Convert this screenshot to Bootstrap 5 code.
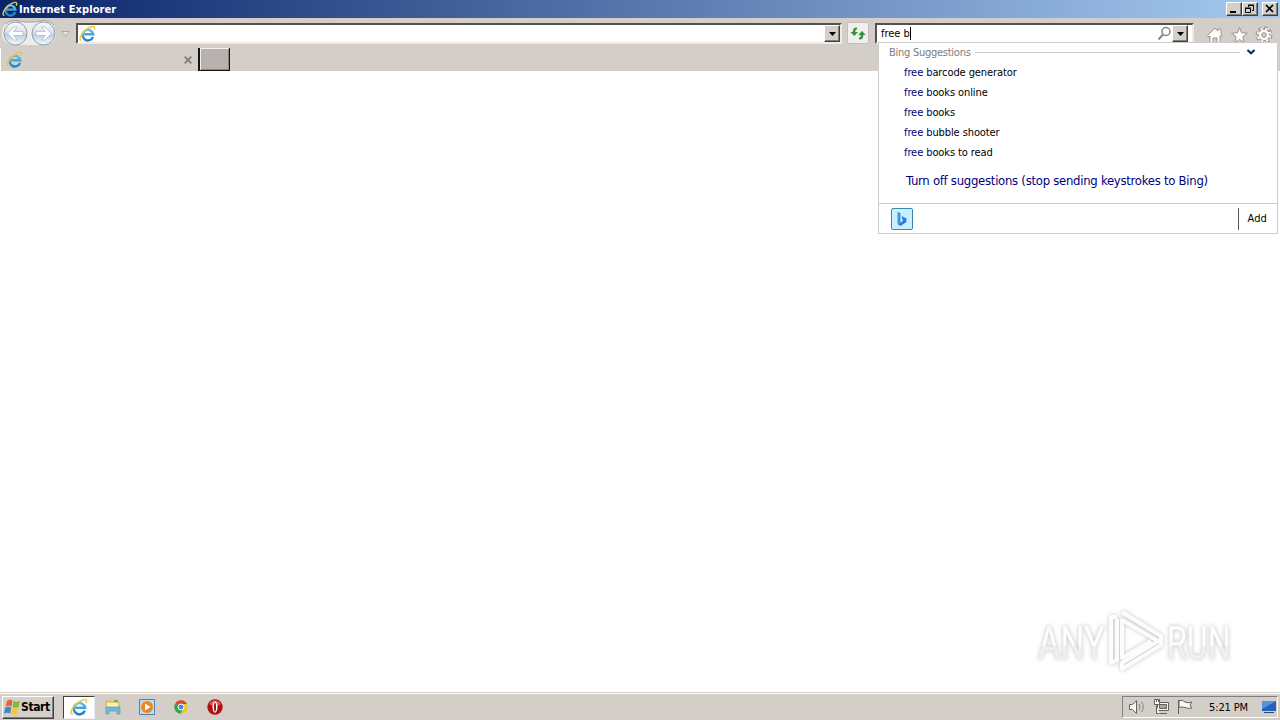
<!DOCTYPE html>
<html lang="en">
<head>
    <meta charset="UTF-8">
    <meta name="viewport" content="width=device-width, initial-scale=1.0">
    <title>Internet Explorer</title>
    <link href="https://cdn.jsdelivr.net/npm/bootstrap@5.3.0/dist/css/bootstrap.min.css" rel="stylesheet">
    <style>
        body {
            font-family: "DejaVu Sans Condensed", "DejaVu Sans", sans-serif;
            font-size: 11px;
            line-height: 14px;
            color: #000;
            background: #fff;
        }
        svg { display: block; flex: none; }
        .face { background: #d4cec8; }

        /* title bar */
        .titlebar {
            height: 18px;
            padding: 0 2px;
            background: linear-gradient(90deg, #0a246a 0%, #a6caf0 100%);
            color: #fff;
        }
        .titlebar-text { font-weight: bold; letter-spacing: .08px; margin-left: 1px; padding-top: 1px; }
        .raised {
            background: #d4d0c8;
            border: 1px solid;
            border-color: #fff #404040 #404040 #fff;
            box-shadow: inset -1px -1px #808080;
        }
        .win-btn { width: 16px; height: 14px; }

        /* toolbar */
        .toolbar { height: 30px; }
        .sunken {
            height: 21px;
            background: #fff;
            border: 2px solid;
            border-color: #55504d #eeeae6 #eeeae6 #55504d;
            margin-top: 5px;
        }
        .address { width: 766px; padding-left: 1px; }
        .search { width: 319px; padding-left: 4px; margin-left: 6px; }
        .search-text { letter-spacing: -.02px; padding-top: 1px; }
        .drop-btn { width: 16px; height: 17px; }
        .caret-line { width: 1px; height: 13px; background: #000; }
        .refresh { width: 22px; height: 22px; background: #f0efed; border: 1px solid #c3bfc0; border-radius: 2px; margin-left: 5px; }

        /* tabs */
        .tabs { height: 23px; }
        .page-tab { width: 198px; border-left: 1px solid #fff; padding: 0 6px 0 5px; }
        .new-tab {
            width: 32px;
            background: #b9b1ad;
            border: solid #151515;
            border-width: 0 1px 1px 2px;
            box-shadow: inset 1px 1px #f3efec, inset -1px -1px #8b8480;
        }

        /* suggestion list */
        .suggest {
            position: absolute;
            left: 878px;
            top: 42px;
            width: 400px;
            height: 192px;
            background: #fff;
            border: 1px solid #ccc;
        }
        .suggest-head { height: 19px; padding: 0 21px 0 10px; color: #7b7b7b; letter-spacing: -.26px; }
        .rule { height: 1px; background: #c9c9c9; margin-left: 4px; margin-right: 6px; }
        .suggest-item { height: 20px; padding-left: 25px; padding-top: 4px; letter-spacing: -.09px; }
        .suggest-item span, .turn-off { color: #00007a; }
        .turn-off { font-size: 13px; padding: 12px 0 0 27px; height: 41px; letter-spacing: -.28px; }
        .suggest-foot { height: 30px; border-top: 1px solid #ccc; padding: 0 10px 0 12px; }
        .add-link { height: 22px; border-left: 1px solid #555; padding: 4px 0 0 8px; letter-spacing: .15px; }

        .watermark { position: absolute; left: 1020px; top: 592px; filter: drop-shadow(0 0 2px #c4c4c4); }

        /* taskbar */
        .taskbar { height: 28px; border-top: 1px solid #d4d0c8; box-shadow: inset 0 1px #fff; padding: 3px 2px 2px; }
        .start-btn { width: 52px; height: 23px; font-size: 12px; font-weight: bold; letter-spacing: -.4px; padding-left: 1px; }
        .task-active { width: 32px; height: 23px; background: #fff; border: 1px solid; border-color: #404040 #eee #eee #404040; margin-left: 9px; }
        .quick { margin-left: 9px; gap: 16px; }
        .tray { width: 156px; height: 22px; border: 1px solid; border-color: #808080 #fff #fff #808080; padding-left: 5px; }
        .clock { letter-spacing: -.12px; margin-left: 15px; padding-top: 1px; white-space: nowrap; }
    </style>
</head>
<body class="vh-100 overflow-hidden d-flex flex-column">

    <!-- shared icons -->
    <svg width="0" height="0" class="position-absolute">
        <defs>
            <linearGradient id="ieBlue" x1="0" y1="0" x2="0" y2="1"><stop offset="0" stop-color="#5cc0ef"/><stop offset="1" stop-color="#2580c8"/></linearGradient>
            <linearGradient id="orb" x1="0" y1="0" x2="0" y2="1"><stop offset="0" stop-color="#fafafb"/><stop offset=".48" stop-color="#dbdfe5"/><stop offset=".52" stop-color="#bccad7"/><stop offset="1" stop-color="#f4fcff"/></linearGradient>
            <linearGradient id="mark" x1="0" y1="0" x2="0" y2="1"><stop offset=".55" stop-color="#fff"/><stop offset=".56" stop-color="#f0f0f0"/></linearGradient>
            <symbol id="ie" viewBox="0 0 16 16">
                <path d="M13.2 11.100A5 5 0 1 1 13.400 8.700H5" fill="none" stroke="url(#ieBlue)" stroke-width="2.300"/>
                <path d="M2.400 14.300C-.4 14.500 1.200 9.200 5.600 5.300 9.600 1.700 14.200.300 14.700 2.300c.2.800-.1 1.500-.5 2.300" fill="none" stroke="#ecc93e" stroke-width="1.400"/>
            </symbol>
            <symbol id="down" viewBox="0 0 7 4"><path d="M0 0h7L3.500 4z"/></symbol>
        </defs>
    </svg>

    <div class="titlebar d-flex align-items-center">
        <svg width="16" height="16"><use href="#ie"/></svg>
        <span class="titlebar-text">Internet Explorer</span>
        <div class="d-flex ms-auto">
            <div class="raised win-btn"><svg width="14" height="12"><path d="M3 8h6v2H3z"/></svg></div>
            <div class="raised win-btn"><svg width="14" height="12"><path d="M5.500 4V2.500h5v5H9M5 2h6M2.500 5.500h5v4h-5zM2 5h6" fill="none" stroke="#000"/></svg></div>
            <div class="raised win-btn ms-1"><svg width="14" height="12"><path d="M3 2l7 7M10 2L3 9" stroke="#000" stroke-width="1.700"/></svg></div>
        </div>
    </div>

    <div class="toolbar face d-flex align-items-start">
        <svg width="76" height="30" viewBox="0 0 76 30">
            <path d="M3 9Q8 2 16 3c8 2 19 2 27 0 8-1 13 6 13 13 0 7-5 11-13 11H16C8 27 2 23 2 16z" fill="#efedec"/>
            <path d="M5 6Q10 2 16 2.500c8 2 19 2 27 0 5 0 9 2 11 4.500" fill="none" stroke="#a9a5a4"/>
            <g fill="url(#orb)" stroke="#8e9eac"><circle cx="15.500" cy="15.500" r="11.500"/><circle cx="43.500" cy="15.500" r="11.500"/></g>
            <g fill="#fff" stroke="#afbac6" stroke-width=".8">
                <path d="M7.500 15.500l6.500-6.500h3.500l-3.800 4.500h9.300v4H13.700l3.800 4.500H14z"/>
                <path d="M51.500 15.500L45 9h-3.500l3.800 4.500H36v4h9.300L41.500 22H45z"/>
            </g>
            <path d="M61.500 13.500h8l-4 4.500z" fill="#e8e4e1" stroke="#b0aaa6"/>
        </svg>
        <div class="address sunken d-flex align-items-center">
            <svg width="17" height="17" class="me-auto"><use href="#ie"/></svg>
            <div class="drop-btn raised d-flex align-items-center justify-content-center"><svg width="7" height="4"><use href="#down"/></svg></div>
        </div>
        <div class="refresh mt-1">
            <svg width="20" height="20" viewBox="0 0 20 20" fill="#389238">
                <path d="M9 4.500Q4.800 4 4.800 9H2.500l3.800 4 3.700-4H7.300Q7 6.500 9 6.300z"/>
                <path d="M11 16.500Q15.300 17 15.300 12H17.700L14 8l-3.800 4h2.600Q13 14.500 11 14.700z"/>
            </svg>
        </div>
        <div class="search sunken d-flex align-items-center">
            <span class="search-text">free b</span><span class="caret-line"></span>
            <svg width="15" height="15" viewBox="0 0 15 15" class="ms-auto"><circle cx="9" cy="5.500" r="4" fill="#fff" stroke="#858585" stroke-width="1.500"/><path d="M6 8.500l-4.500 5" stroke="#858585" stroke-width="2"/></svg>
            <div class="drop-btn raised d-flex align-items-center justify-content-center me-1"><svg width="7" height="4"><use href="#down"/></svg></div>
        </div>
        <svg width="82" height="30" viewBox="1196 18 82 30" class="ms-auto" style="margin-right:2px" fill="#fff" stroke="#99938f">
            <path d="M1207.500 35.500l7.500-7.500 3 3v-2h3v5l1.500 1.500-1.500 1-1-1V45h-3v-7h-4v7h-3v-9l-1 1z"/>
            <path d="M1239.500 27.500l2 5.300 5.800.3-4.500 3.700 1.500 5.900-4.800-3.200-4.800 3.200 1.500-5.900-4.500-3.700 5.800-.3z"/>
            <g stroke="none"><circle cx="1264" cy="35" r="6.600" fill="none" stroke="#938e8a" stroke-width="3.600" stroke-dasharray="3 2.184"/><circle cx="1264" cy="35" r="5.700" fill="#fff" stroke="#938e8a"/><circle cx="1264" cy="35" r="6.200" fill="none" stroke="#fff" stroke-width="2.400" stroke-dasharray="1.900 2.970" stroke-dashoffset="-.5"/><circle cx="1264" cy="35" r="2.300" fill="#d4cec8" stroke="#938e8a"/></g>
        </svg>
    </div>

    <div class="tabs face d-flex">
        <div class="page-tab d-flex align-items-center justify-content-between">
            <svg width="17" height="17"><use href="#ie"/></svg>
            <svg width="8" height="8"><path d="M.7.700l6.600 6.600M7.300.700L.700 7.300" stroke="#827b76" stroke-width="1.900"/></svg>
        </div>
        <div class="new-tab"></div>
    </div>

    <main class="flex-grow-1 bg-white"></main>

    <div class="suggest d-flex flex-column">
        <div class="suggest-head d-flex align-items-center">
            <span>Bing Suggestions</span>
            <div class="rule flex-grow-1"></div>
            <svg width="10" height="7"><path d="M1.500 1L5 4.300 8.500 1" fill="none" stroke="#102b70" stroke-width="2.200"/></svg>
        </div>
        <div class="suggest-item"><span>free b</span>arcode generator</div>
        <div class="suggest-item"><span>free b</span>ooks online</div>
        <div class="suggest-item"><span>free b</span>ooks</div>
        <div class="suggest-item"><span>free b</span>ubble shooter</div>
        <div class="suggest-item"><span>free b</span>ooks to read</div>
        <div class="turn-off">Turn off suggestions (stop sending keystrokes to Bing)</div>
        <div class="suggest-foot d-flex align-items-center justify-content-between">
            <svg width="22" height="22" viewBox="0 0 22 22"><rect x=".5" y=".5" width="21" height="21" rx="1.500" fill="#c9effd" stroke="#338aaa"/><path d="M6.500 4l3 1v9l-3 2z" fill="#3a94e2"/><path d="M10.500 8l5 2.500V14l-6 4-3-2 5.500-3z" fill="#2d7bd8"/></svg>
            <div class="add-link">Add</div>
        </div>
    </div>

    <!-- sandbox watermark -->
    <svg class="watermark" width="240" height="96" viewBox="1020 592 240 96">
        <g font-family="Roboto, sans-serif" font-size="46" fill="url(#mark)" stroke="#ececec" stroke-width=".5">
            <text transform="translate(1038 658.500) scale(.74 1)">ANY</text>
            <text transform="translate(1167 658.500) scale(.7 1)">RUN</text>
        </g>
        <g fill="none" stroke="#fcfcfc" stroke-width="4" stroke-linejoin="round">
            <path d="M1117 617h-6v46l6-3V619"/>
            <path d="M1122 612l39 24v9l-39 24v-6l36-22-36-21v38l29-17"/>
        </g>
    </svg>

    <div class="taskbar face d-flex align-items-center">
        <div class="start-btn raised d-flex align-items-center">
            <svg width="17" height="17" viewBox="0 0 17 17">
                <path d="M3 2q3-2 5.500-.5L7.500 7.500Q5 6 1.500 7.500z" fill="#ed6332"/>
                <path d="M9.500 2q3 1.500 6.500 0L14.500 8q-3 1.500-6 0z" fill="#78bd3b"/>
                <path d="M1.300 8.500Q5 7 7.200 8.500l-1 6Q3.500 13 0 14.500z" fill="#3689cf"/>
                <path d="M8.200 9q3 1.500 6.200 0L13 15q-3 1.500-6 0z" fill="#f9c62c"/>
            </svg>
            <span>Start</span>
        </div>
        <div class="task-active d-flex align-items-center justify-content-center"><svg width="18" height="18"><use href="#ie"/></svg></div>
        <div class="quick d-flex">
            <svg width="18" height="18" viewBox="0 0 18 18"><path d="M2 3h5l1 1h7v8H2z" fill="#edcf70" stroke="#c9a949" stroke-width=".6"/><path d="M3 5h11v4H3z" fill="#faf0b4"/><path d="M10 2h4v2h-4z" fill="#62b56a"/><path d="M2 9h14v7h-3v-3H5v3H2z" fill="#72b8dc" stroke="#4c94bb" stroke-width=".6"/></svg>
            <svg width="18" height="18" viewBox="0 0 18 18"><path d="M1.500 1.500h15v15h-15z" fill="#bcdcf3" stroke="#4c83b5"/><circle cx="9" cy="9" r="6" fill="#f08619"/><path d="M7 5.500l5.500 3.500L7 12.500z" fill="#fff"/></svg>
            <svg width="18" height="18" viewBox="0 0 18 18"><circle cx="9" cy="9" r="6.700" fill="#f3c52c"/><path d="M9 9L3.300 5.500A6.700 6.700 0 0 1 15 6H9z" fill="#dc4437"/><path d="M9 9L3.300 5.500A6.700 6.700 0 0 0 8.500 15.700l3-5.200z" fill="#30a357"/><circle cx="9" cy="9" r="3" fill="#4c87e8" stroke="#fff"/></svg>
            <svg width="18" height="18" viewBox="0 0 18 18"><circle cx="9" cy="9" r="7.700" fill="#b21012"/><path d="M3 6a7 7 0 0 1 12 0q-6 4-12 0" fill="#dd5955"/><ellipse cx="9" cy="9" rx="2.500" ry="5.700" fill="#fff"/><ellipse cx="9" cy="9" rx="1" ry="4.500" fill="#a01013"/></svg>
        </div>
        <div class="tray d-flex align-items-center ms-auto">
            <svg width="66" height="18" viewBox="1128 698 66 18" fill="#f7f7f5" stroke="#66625f">
                <path d="M1129.500 704.500h3l4-4v13l-4-4h-3z"/>
                <path d="M1139 704q2 3 0 6M1141.500 702q3.500 5 0 10" fill="none" stroke="#868280"/>
                <path d="M1157.500 702.500h11v8h-11zM1160 713.500h7"/><path d="M1159.500 704.500h7v4h-7z" fill="#a8a5a2"/>
                <path d="M1154.500 699.500h5v5h-5zM1156.500 699v3M1158.500 699v3M1156.500 705v8.500h3"/>
                <path d="M1178.500 700v14M1179 700.500q4-1 6 1.500 3 1.500 7 0l-2 3 2 3q-4 1-7-.5-2-1-6 0z"/>
            </svg>
            <span class="clock">5:21 PM</span>
            <svg width="16" height="14" viewBox="0 0 16 14" class="ms-auto"><path d="M1 1h14v10H1z" fill="#2363bd"/><path d="M1 1h14L1 9z" fill="#5595df"/><path d="M3 12h10v1H3z" fill="#314a68"/></svg>
        </div>
    </div>

    <script src="https://cdn.jsdelivr.net/npm/bootstrap@5.3.0/dist/js/bootstrap.bundle.min.js"></script>
</body>
</html>
